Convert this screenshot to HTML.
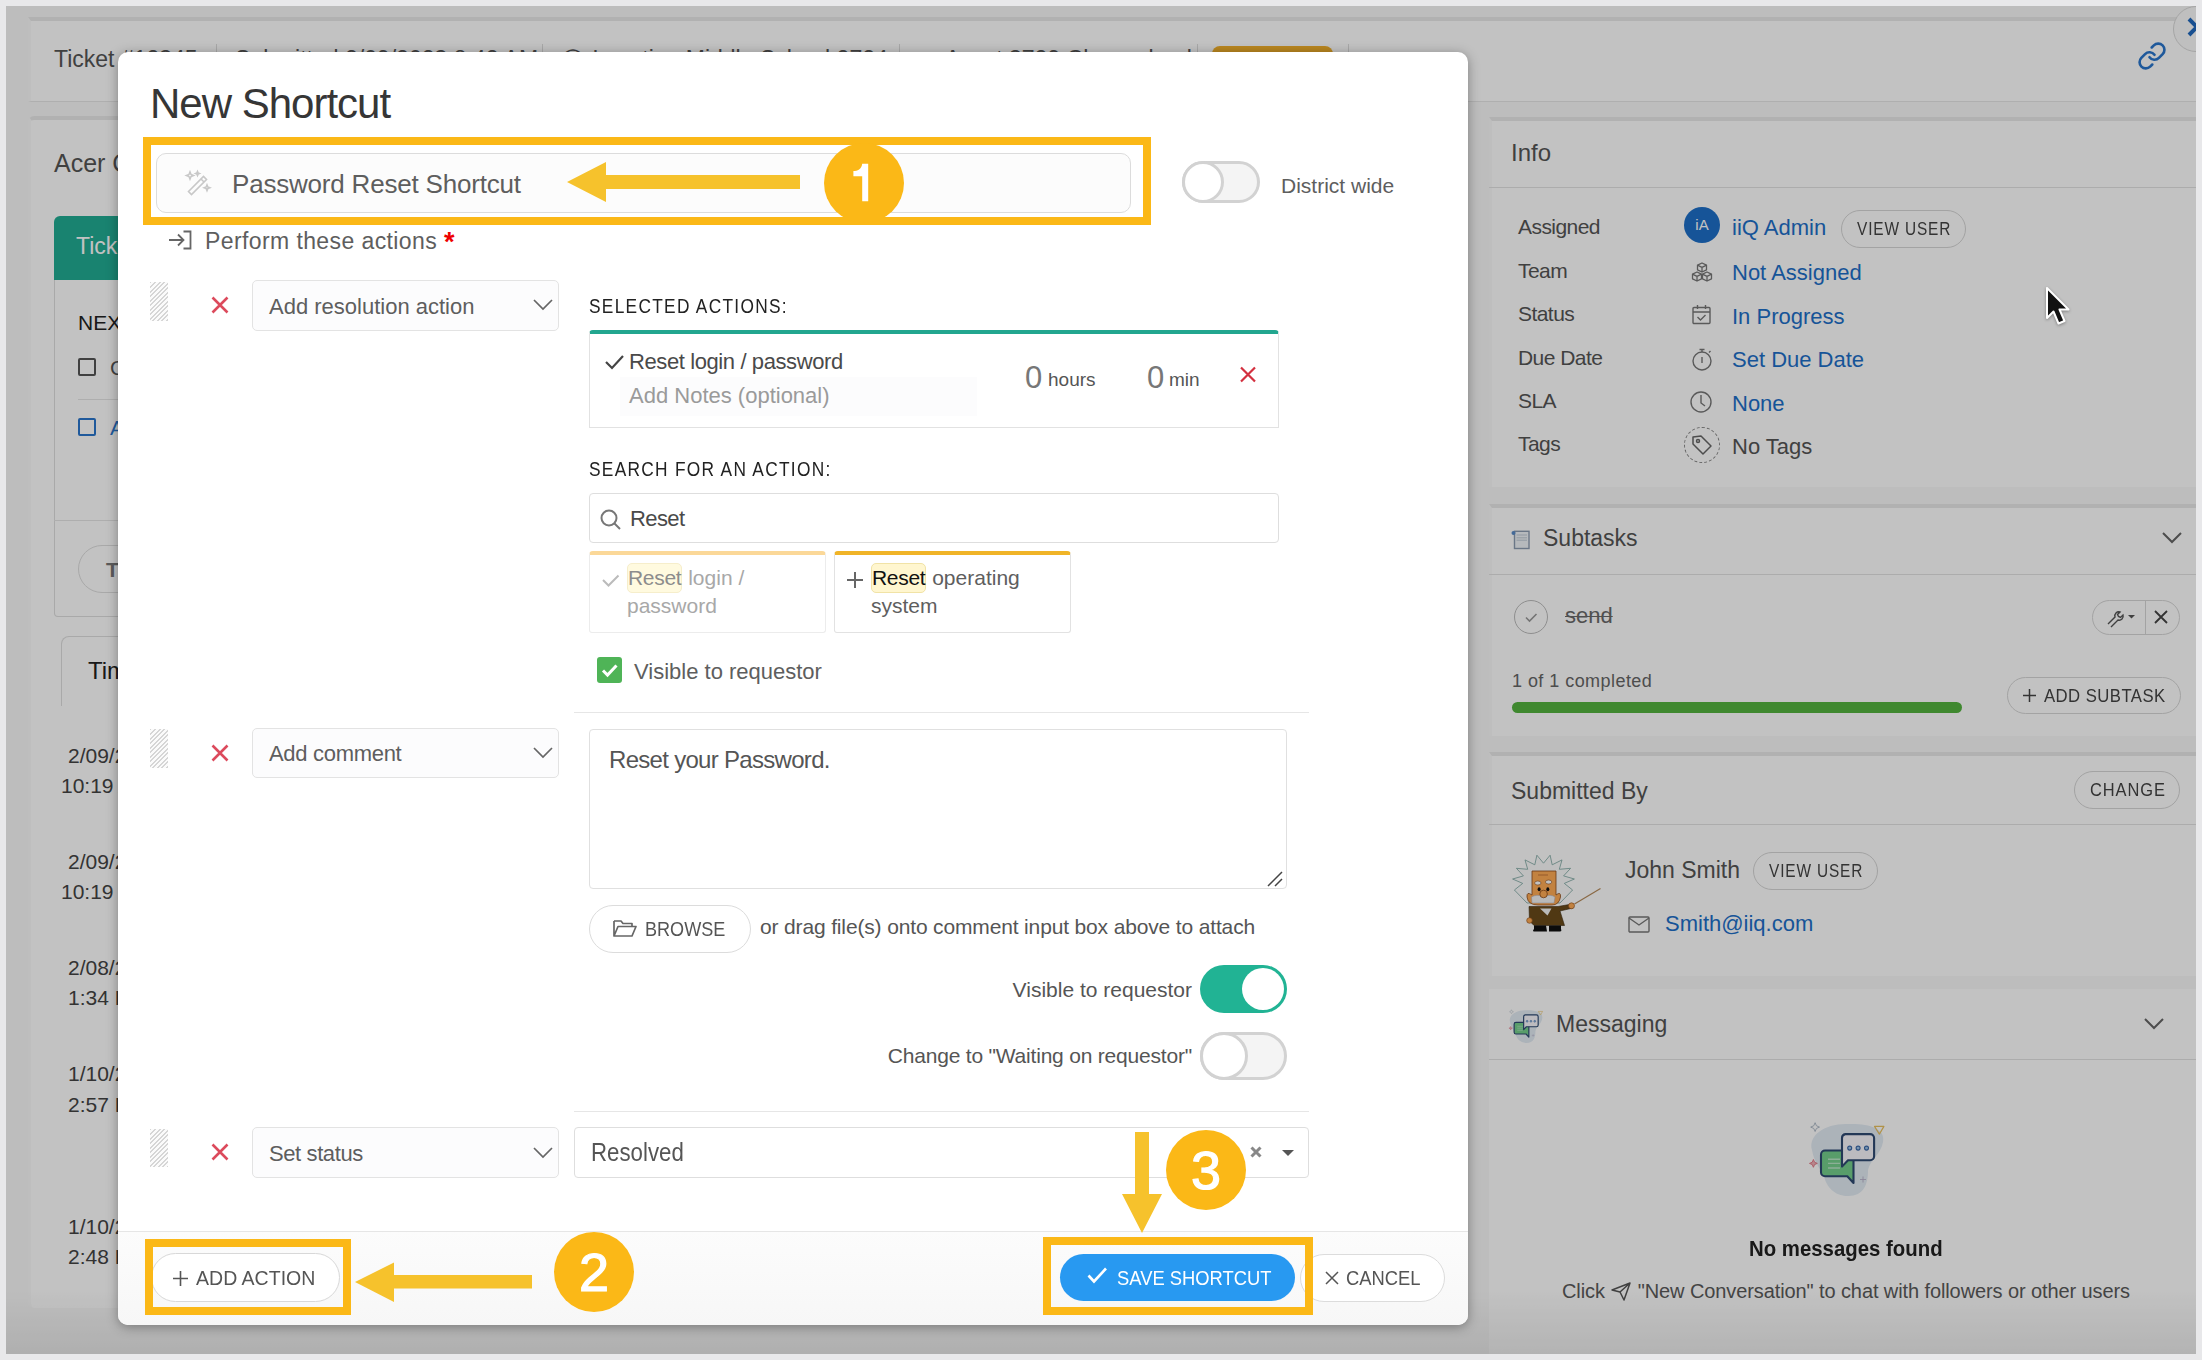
<!DOCTYPE html>
<html><head><meta charset="utf-8">
<style>
*{box-sizing:border-box;margin:0;padding:0}
html,body{width:2202px;height:1360px;overflow:hidden;background:#e8e8ea;font-family:"Liberation Sans",sans-serif}
.a{position:absolute}
.t{position:absolute;white-space:nowrap;line-height:1}
#page{position:absolute;left:6px;top:6px;width:2190px;height:1348px;background:#f9f9f9;overflow:hidden}
#ov{position:absolute;left:6px;top:6px;width:2190px;height:1348px;background:rgba(0,0,0,0.24)}
.card{position:absolute;background:#fff;border-top:4px solid #e9e9e9;border-left:3px solid #fafafa}
#modal{position:absolute;left:118px;top:52px;width:1350px;height:1273px;background:#fff;border-radius:10px;box-shadow:0 2px 12px rgba(0,0,0,.35);overflow:hidden}
.yb{position:absolute;border:8px solid #fbb817}
.num{position:absolute;width:80px;height:80px;border-radius:50%;background:#fbb817;color:#fff;font-size:54px;text-align:center;line-height:80px;-webkit-text-stroke:1.2px #fff;font-family:"Liberation Sans",sans-serif}
.hatch{background:repeating-linear-gradient(135deg,#d6d6d6 0 1.4px,#fbfbfb 1.4px 3.2px)}
.hl{display:inline-block;background:#fff6cf;border:1px solid #f1e3a6;border-radius:5px;padding:3px 0 4px;margin:-4px 0 0 0;letter-spacing:-0.3px}
.sel{border:1px solid #e3e3e3;border-radius:5px;background:#fcfcfd}
</style></head><body>
<div id="page"></div>

<!-- top header card -->
<div class="card" style="left:28px;top:17px;width:2168px;height:85px;border-bottom:1px solid #e6e6e6"></div>
<div class="t" style="left:54px;top:48px;font-size:23px;color:#555">Ticket #12345</div>
<div class="t" style="left:235px;top:48px;font-size:23px;color:#555">Submitted 2/09/2023 8:42 AM</div>
<div class="t" style="left:560px;top:48px;font-size:23px;color:#555">&#9711; Location Middle School 2724</div>
<div class="t" style="left:918px;top:48px;font-size:23px;color:#555">&#9634; Asset 3729 Chromebook</div>
<div class="a" style="left:216px;top:44px;width:1px;height:30px;background:#ddd"></div>
<div class="a" style="left:542px;top:44px;width:1px;height:30px;background:#ddd"></div>
<div class="a" style="left:899px;top:44px;width:1px;height:30px;background:#ddd"></div>
<div class="a" style="left:1197px;top:44px;width:1px;height:30px;background:#ddd"></div>
<div class="a" style="left:1348px;top:44px;width:1px;height:30px;background:#ddd"></div>
<div class="a" style="left:1212px;top:46px;width:121px;height:30px;background:#f3b12a;border-radius:8px"></div>
<svg class="a" style="left:2137px;top:41px" width="30" height="30" viewBox="0 0 24 24"><g fill="none" stroke="#2a76cc" stroke-width="2.1" stroke-linecap="round"><path d="M10 13a5 5 0 0 0 7.54.54l3-3a5 5 0 0 0-7.07-7.07l-1.72 1.71"/><path d="M14 11a5 5 0 0 0-7.54-.54l-3 3a5 5 0 0 0 7.07 7.07l1.71-1.71"/></g></svg>
<div class="a" style="left:6px;top:6px;width:2190px;height:1347px;overflow:hidden"><div class="a" style="left:2167px;top:0px;width:46px;height:46px;border-radius:50%;background:#fcfcfc;border:1px solid #d8d8d8"></div><svg class="a" style="left:2180px;top:10px" width="14" height="22" viewBox="0 0 14 22"><path d="M3 3 l8 8 l-8 8" fill="none" stroke="#2068be" stroke-width="4"/></svg></div>

<!-- left main card -->
<div class="card" style="left:28px;top:116px;width:1440px;height:1192px;border-radius:6px"></div>
<div class="t" style="left:54px;top:151px;font-size:25px;color:#555">Acer Chromebook</div>
<div class="a" style="left:54px;top:216px;width:500px;height:64px;background:#21ad94;border-radius:6px 0 0 0"></div>
<div class="t" style="left:76px;top:235px;font-size:23px;color:#fff">Tickets</div>
<div class="a" style="left:54px;top:280px;width:1300px;height:337px;border:1px solid #dedede;border-top:none;border-radius:0 0 4px 4px"></div>
<div class="t" style="left:78px;top:312px;font-size:21px;color:#222">NEXT</div>
<div class="a" style="left:78px;top:358px;width:18px;height:18px;border:2px solid #555;border-radius:2px"></div>
<div class="t" style="left:110px;top:357px;font-size:21px;color:#555">Check</div>
<div class="a" style="left:78px;top:399px;width:1200px;height:1px;background:#e5e5e5"></div>
<div class="a" style="left:78px;top:418px;width:18px;height:18px;border:2px solid #2a76cc;border-radius:2px"></div>
<div class="t" style="left:110px;top:417px;font-size:21px;color:#2a76cc">Add</div>
<div class="a" style="left:54px;top:520px;width:1300px;height:1px;background:#e5e5e5"></div>
<div class="a" style="left:78px;top:545px;width:200px;height:48px;border:1px solid #dedede;border-radius:24px"></div>
<div class="t" style="left:106px;top:559px;font-size:21px;color:#777;font-weight:bold">T</div>
<div class="a" style="left:61px;top:636px;width:300px;height:70px;border:1px solid #dedede;border-bottom:none;border-radius:8px 8px 0 0"></div>
<div class="t" style="left:88px;top:659px;font-size:24px;color:#222">Time</div>
<div class="t" style="left:68px;top:745px;font-size:21px;color:#444">2/09/2023</div>
<div class="t" style="left:61px;top:775px;font-size:21px;color:#444">10:19 AM</div>
<div class="t" style="left:68px;top:851px;font-size:21px;color:#444">2/09/2023</div>
<div class="t" style="left:61px;top:881px;font-size:21px;color:#444">10:19 AM</div>
<div class="t" style="left:68px;top:957px;font-size:21px;color:#444">2/08/2023</div>
<div class="t" style="left:68px;top:987px;font-size:21px;color:#444">1:34 PM</div>
<div class="t" style="left:68px;top:1063px;font-size:21px;color:#444">1/10/2023</div>
<div class="t" style="left:68px;top:1094px;font-size:21px;color:#444">2:57 PM</div>
<div class="t" style="left:68px;top:1216px;font-size:21px;color:#444">1/10/2023</div>
<div class="t" style="left:68px;top:1246px;font-size:21px;color:#444">2:48 PM</div>

<!-- right cards -->
<div class="card" style="left:1489px;top:117px;width:707px;height:370px"></div>
<div class="card" style="left:1489px;top:504px;width:707px;height:232px"></div>
<div class="card" style="left:1489px;top:752px;width:707px;height:224px"></div>
<div class="a" style="left:1489px;top:989px;width:707px;height:365px;background:#fff"></div>


<!-- right panel content -->
<div class="t" style="left:1511px;top:141px;font-size:24px;color:#555">Info</div>
<div class="a" style="left:1489px;top:187px;width:707px;height:1px;background:#e3e3e3"></div>
<div class="t" style="left:1518px;top:216px;font-size:21px;color:#555;letter-spacing:-0.55px">Assigned</div>
<div class="t" style="left:1518px;top:260px;font-size:21px;color:#555;letter-spacing:-0.55px">Team</div>
<div class="t" style="left:1518px;top:303px;font-size:21px;color:#555;letter-spacing:-0.55px">Status</div>
<div class="t" style="left:1518px;top:347px;font-size:21px;color:#555;letter-spacing:-0.55px">Due Date</div>
<div class="t" style="left:1518px;top:390px;font-size:21px;color:#555;letter-spacing:-0.55px">SLA</div>
<div class="t" style="left:1518px;top:433px;font-size:21px;color:#555;letter-spacing:-0.55px">Tags</div>
<div class="a" style="left:1684px;top:207px;width:36px;height:36px;border-radius:50%;background:#1d6fc8;color:#fff;font-size:15px;text-align:center;line-height:36px">iA</div>
<div class="t" style="left:1732px;top:217px;font-size:22px;color:#1d6fc8">iiQ Admin</div>
<div class="a" style="left:1841px;top:210px;width:125px;height:38px;border:1px solid #d6d6d6;border-radius:19px"></div>
<div class="t" style="left:1857px;top:220px;font-size:18px;color:#444;letter-spacing:1px;transform:scaleX(.856);transform-origin:left">VIEW USER</div>
<svg class="a" style="left:1690px;top:260px" width="24" height="24" viewBox="0 0 24 24"><g fill="none" stroke="#777" stroke-width="1.3" stroke-linejoin="round"><path d="M12 3 l4.5 2.2 v4.6 L12 12 l-4.5-2.2 V5.2z M7.5 5.2 L12 7.4 l4.5-2.2 M12 7.4 V12"/><path d="M7 12 l4.5 2.2 v4.6 L7 21 l-4.5-2.2 V14.2z M2.5 14.2 L7 16.4 l4.5-2.2 M7 16.4 V21"/><path d="M17 12 l4.5 2.2 v4.6 L17 21 l-4.5-2.2 V14.2z M12.5 14.2 L17 16.4 l4.5-2.2 M17 16.4 V21"/></g></svg>
<div class="t" style="left:1732px;top:262px;font-size:22px;color:#1d6fc8">Not Assigned</div>
<svg class="a" style="left:1690px;top:303px" width="24" height="24" viewBox="0 0 24 24"><g fill="none" stroke="#777" stroke-width="1.4"><rect x="3" y="4.5" width="17" height="16" rx="1"/><path d="M3 9 h17 M7.5 2 v4 M15.5 2 v4 M7.5 14 l3 3 l5-5"/></g></svg>
<div class="t" style="left:1732px;top:306px;font-size:22px;color:#1d6fc8">In Progress</div>
<svg class="a" style="left:1690px;top:346px" width="24" height="26" viewBox="0 0 24 26"><g fill="none" stroke="#777" stroke-width="1.4"><circle cx="12" cy="15" r="9"/><path d="M12 11 v6 M9.5 3.5 h5 M12 3.5 v2.5 M19 6.5 l1.5-1.5"/></g></svg>
<div class="t" style="left:1732px;top:349px;font-size:22px;color:#1d6fc8">Set Due Date</div>
<svg class="a" style="left:1688px;top:389px" width="26" height="26" viewBox="0 0 26 26"><g fill="none" stroke="#777" stroke-width="1.4"><circle cx="13" cy="13" r="10"/><path d="M13 6 v8 l4 3"/></g></svg>
<div class="t" style="left:1732px;top:393px;font-size:22px;color:#1d6fc8">None</div>
<div class="a" style="left:1684px;top:427px;width:36px;height:36px;border-radius:50%;border:1.3px dashed #888"></div>
<svg class="a" style="left:1690px;top:433px" width="24" height="24" viewBox="0 0 24 24"><g fill="none" stroke="#666" stroke-width="1.5" stroke-linejoin="round"><path d="M3 4 l8 -1 l10 10 l-8 8 l-10-10 z"/><circle cx="8" cy="8" r="1.5"/></g></svg>
<div class="t" style="left:1732px;top:436px;font-size:22px;color:#555">No Tags</div>

<svg class="a" style="left:1509px;top:528px" width="24" height="24" viewBox="0 0 24 24"><rect x="5.5" y="3.3" width="14.5" height="17.2" fill="#f0f4f8" stroke="#8c9cb0" stroke-width="1.4"/><path d="M7.5 7 H18 M7.5 9.8 H18 M7.5 12.2 H18" stroke="#b4c0cc" stroke-width="0.8"/><circle cx="4.5" cy="5" r="2" fill="#5a8cc8"/></svg>
<div class="t" style="left:1543px;top:527px;font-size:23px;color:#555">Subtasks</div>
<svg class="a" style="left:2160px;top:530px" width="24" height="16" viewBox="0 0 24 16"><path d="M3 3 l9 9 l9-9" fill="none" stroke="#666" stroke-width="2"/></svg>
<div class="a" style="left:1489px;top:574px;width:707px;height:1px;background:#e3e3e3"></div>
<div class="a" style="left:1514px;top:600px;width:34px;height:34px;border-radius:50%;border:1.5px solid #bbb"></div>
<svg class="a" style="left:1521px;top:607px" width="20" height="20" viewBox="0 0 20 20"><path d="M5 10.5 l3.5 3.5 l7-7" fill="none" stroke="#999" stroke-width="1.6"/></svg>
<div class="t" style="left:1565px;top:605px;font-size:22px;color:#6a6a6a;text-decoration:line-through;text-decoration-thickness:1px">send</div>
<div class="a" style="left:2092px;top:600px;width:88px;height:35px;border:1px solid #d6d6d6;border-radius:18px"></div>
<div class="a" style="left:2145px;top:600px;width:1px;height:35px;background:#d6d6d6"></div>
<svg class="a" style="left:2104px;top:606px" width="36" height="22" viewBox="0 0 36 22"><path d="M4 18 l7-7 a4 4 0 0 1 5-5 l-2.5 2.5 l1 2 l2 1 l2.5-2.5 a4 4 0 0 1-5 5 l-7 7" fill="none" stroke="#555" stroke-width="1.4"/><path d="M24 9 h7 l-3.5 3.5z" fill="#555"/></svg>
<svg class="a" style="left:2153px;top:609px" width="16" height="16" viewBox="0 0 16 16"><path d="M2 2 L14 14 M14 2 L2 14" stroke="#444" stroke-width="1.8"/></svg>
<div class="t" style="left:1512px;top:672px;font-size:18px;color:#666;letter-spacing:0.45px">1 of 1 completed</div>
<div class="a" style="left:1512px;top:702px;width:450px;height:11px;border-radius:6px;background:#53b33f"></div>
<div class="a" style="left:2007px;top:677px;width:174px;height:37px;border:1px solid #d6d6d6;border-radius:19px"></div>
<svg class="a" style="left:2022px;top:688px" width="15" height="15" viewBox="0 0 15 15"><path d="M7.5 1 V14 M1 7.5 H14" stroke="#444" stroke-width="1.5"/></svg>
<div class="t" style="left:2044px;top:686px;font-size:19px;color:#444;letter-spacing:0.5px;transform:scaleX(.88);transform-origin:left">ADD SUBTASK</div>

<div class="t" style="left:1511px;top:780px;font-size:23px;color:#555">Submitted By</div>
<div class="a" style="left:2074px;top:771px;width:106px;height:38px;border:1px solid #d6d6d6;border-radius:19px"></div>
<div class="t" style="left:2090px;top:781px;font-size:18px;color:#444;letter-spacing:1px;transform:scaleX(.913);transform-origin:left">CHANGE</div>
<div class="a" style="left:1489px;top:824px;width:707px;height:1px;background:#e3e3e3"></div>
<svg class="a" style="left:1500px;top:845px" width="110" height="95" viewBox="0 0 110 95">
<polygon points="14.4,45.0 22.7,38.4 12.6,34.0 23.4,30.9 16.4,23.3 27.7,24.3 25.0,14.9 34.8,19.8 36.9,10.2 43.5,18.2 50.1,10.2 52.2,19.8 62.0,14.9 59.3,24.3 70.6,23.3 63.6,30.9 74.4,34.0 64.3,38.4 72.6,45.0 60,58 27,58" fill="#fbfcfc" stroke="#7aa5a0" stroke-width="0.8" stroke-linejoin="miter"/>
<path d="M32 26 H56 V50 Q61 46 60.5 52 Q59 60 52 60 H38 Q28 60 27 52 Q26.5 46 32 50 Z" fill="#ffab55" stroke="#8a4a1a" stroke-width="0.8"/>
<path d="M38 30 h10" stroke="#b86a30" stroke-width="0.8"/>
<ellipse cx="37.8" cy="38" rx="3.2" ry="2" fill="#fff" stroke="#8a4a1a" stroke-width="0.6"/><ellipse cx="48.6" cy="37" rx="3.2" ry="2" fill="#fff" stroke="#8a4a1a" stroke-width="0.6"/>
<ellipse cx="39.1" cy="44.3" rx="1.5" ry="2" fill="#111"/><ellipse cx="47.8" cy="44.3" rx="1.5" ry="2" fill="#111"/>
<path d="M31.5 52 Q36 49 43.5 51.5 Q51 49 55 52 L54 58 H32 Z" fill="#f4f4f4" stroke="#aab" stroke-width="0.5"/>
<circle cx="43.6" cy="49" r="3.8" fill="#ffab55" stroke="#8a4a1a" stroke-width="0.8"/>
<path d="M29 61.5 H58 L72 59 L73 63 L60 66 L64.5 80.5 H34 L29.5 76 Z" fill="#6a4a1a" stroke="#3a2a10" stroke-width="0.6"/>
<path d="M40 63.5 H51.5 L47.5 70.5 Z" fill="#f4f4f4"/>
<circle cx="71.5" cy="60.8" r="3" fill="#ffab55" stroke="#8a4a1a" stroke-width="0.6"/>
<circle cx="29.5" cy="75.5" r="2.8" fill="#ffab55" stroke="#8a4a1a" stroke-width="0.6"/>
<path d="M74.5 59 L100.5 43.5" stroke="#b58a5a" stroke-width="1.2"/>
<path d="M34 80.5 H46 L47 86.5 H34 Q32 86.5 34 84 Z M49 80.5 H61 V84 Q62 86.5 60 86.5 H49 Z" fill="#111"/>
</svg>
<div class="t" style="left:1625px;top:859px;font-size:23px;color:#555">John Smith</div>
<div class="a" style="left:1753px;top:852px;width:125px;height:38px;border:1px solid #d6d6d6;border-radius:19px"></div>
<div class="t" style="left:1769px;top:862px;font-size:18px;color:#444;letter-spacing:1px;transform:scaleX(.856);transform-origin:left">VIEW USER</div>
<svg class="a" style="left:1627px;top:915px" width="24" height="20" viewBox="0 0 24 20"><g fill="none" stroke="#777" stroke-width="1.4"><rect x="2" y="2" width="20" height="15" rx="1"/><path d="M2 3 l10 7 l10-7"/></g></svg>
<div class="t" style="left:1665px;top:913px;font-size:22px;color:#1d6fc8">Smith@iiq.com</div>

<svg class="a" style="left:1500px;top:1004px" width="50" height="43" viewBox="0 0 110 95">
<path d="M22 40 C18 26 34 14 56 14 C78 13 96 18 93 32 C91 44 80 50 78 60 C78 74 74 86 58 86 C44 86 36 76 34 66 C30 58 24 52 22 40 Z" fill="#e2ebf4"/>
<path d="M35 40.5 H59.5 a4 4 0 0 1 4 4 V73 L57.3 66.3 H35 a4 4 0 0 1-4-4 V44.5 a4 4 0 0 1 4-4 Z" fill="#74cf8c" stroke="#2e4a72" stroke-width="2.6" stroke-linejoin="round"/>
<path d="M38 49.2 H50 M38 53.4 H50 M38 58 H50" stroke="#b8e6c6" stroke-width="1.4"/>
<path d="M55.3 24.1 H80.1 a4 4 0 0 1 4 4 V46.3 a4 4 0 0 1-4 4 H58 L52 56.6 V28.1 a4 4 0 0 1 3.3-4 Z" fill="#f8f6fc" stroke="#2e4a72" stroke-width="2.6" stroke-linejoin="round"/>
<g fill="#9cc2e6" stroke="#3a68a8" stroke-width="1.1"><circle cx="59.7" cy="38.1" r="2"/><circle cx="68.1" cy="38.1" r="2"/><circle cx="76.5" cy="38.1" r="2"/></g>
<path d="M25.1 12.7 Q25.6 16.6 29.5 17.1 Q25.6 17.6 25.1 21.5 Q24.6 17.6 20.7 17.1 Q24.6 16.6 25.1 12.7 Z" fill="none" stroke="#a8b4c2" stroke-width="0.9"/>
<path d="M84.5 16.4 H93.9 L89.4 24.1 Z" fill="none" stroke="#e8c060" stroke-width="1.2" stroke-linejoin="round"/>
<path d="M23.4 49.5 Q23.8 53 27.3 53.4 Q23.8 53.8 23.4 57.3 Q23 53.8 19.5 53.4 Q23 53 23.4 49.5 Z" fill="#f0b0b8" stroke="#e07080" stroke-width="0.9"/>
<path d="M73 66.5 V72.5 M70 69.5 H76" stroke="#b8b0c8" stroke-width="0.9"/>
</svg>
<div class="t" style="left:1556px;top:1013px;font-size:23px;color:#555">Messaging</div>
<svg class="a" style="left:2142px;top:1016px" width="24" height="16" viewBox="0 0 24 16"><path d="M3 3 l9 9 l9-9" fill="none" stroke="#666" stroke-width="2"/></svg>
<div class="a" style="left:1489px;top:1059px;width:707px;height:1px;background:#e3e3e3"></div>
<svg class="a" style="left:1790px;top:1110px" width="110" height="95" viewBox="0 0 110 95">
<path d="M22 40 C18 26 34 14 56 14 C78 13 96 18 93 32 C91 44 80 50 78 60 C78 74 74 86 58 86 C44 86 36 76 34 66 C30 58 24 52 22 40 Z" fill="#e2ebf4"/>
<path d="M35 40.5 H59.5 a4 4 0 0 1 4 4 V73 L57.3 66.3 H35 a4 4 0 0 1-4-4 V44.5 a4 4 0 0 1 4-4 Z" fill="#74cf8c" stroke="#2e4a72" stroke-width="2.1" stroke-linejoin="round"/>
<path d="M38 49.2 H50 M38 53.4 H50 M38 58 H50" stroke="#b8e6c6" stroke-width="1.4"/>
<path d="M55.3 24.1 H80.1 a4 4 0 0 1 4 4 V46.3 a4 4 0 0 1-4 4 H58 L52 56.6 V28.1 a4 4 0 0 1 3.3-4 Z" fill="#f8f6fc" stroke="#2e4a72" stroke-width="2.1" stroke-linejoin="round"/>
<g fill="#9cc2e6" stroke="#3a68a8" stroke-width="1.1"><circle cx="59.7" cy="38.1" r="2"/><circle cx="68.1" cy="38.1" r="2"/><circle cx="76.5" cy="38.1" r="2"/></g>
<path d="M25.1 12.7 Q25.6 16.6 29.5 17.1 Q25.6 17.6 25.1 21.5 Q24.6 17.6 20.7 17.1 Q24.6 16.6 25.1 12.7 Z" fill="none" stroke="#a8b4c2" stroke-width="0.9"/>
<path d="M84.5 16.4 H93.9 L89.4 24.1 Z" fill="none" stroke="#e8c060" stroke-width="1.2" stroke-linejoin="round"/>
<path d="M23.4 49.5 Q23.8 53 27.3 53.4 Q23.8 53.8 23.4 57.3 Q23 53.8 19.5 53.4 Q23 53 23.4 49.5 Z" fill="#f0b0b8" stroke="#e07080" stroke-width="0.9"/>
<path d="M73 66.5 V72.5 M70 69.5 H76" stroke="#b8b0c8" stroke-width="0.9"/>
</svg>
<div class="t" style="left:1749px;top:1238px;font-size:22px;color:#222;font-weight:bold;transform:scaleX(.926);transform-origin:left">No messages found</div>
<div class="t" style="left:1562px;top:1281px;font-size:20px;color:#5a5a5a;letter-spacing:-0.1px">Click <svg width="22" height="20" viewBox="0 0 22 20" style="vertical-align:-3px"><path d="M2 9 L20 2 L14 19 L10 11z M10 11 L20 2" fill="none" stroke="#555" stroke-width="1.5" stroke-linejoin="round"/></svg> "New Conversation" to chat with followers or other users</div>
<!-- cursor -->
<div class="a" style="left:6px;top:1290px;width:2190px;height:64px;background:linear-gradient(rgba(0,0,0,0),rgba(0,0,0,0.075))"></div>
<div id="ov"></div>
<svg class="a" style="left:2045px;top:286px;filter:drop-shadow(0 1px 1.5px rgba(0,0,0,.35))" width="30" height="44" viewBox="0 0 30 44"><path d="M2 2 L2 32 L8.5 25.5 L13.5 37.5 L19.5 35 L14.5 23.5 L23.5 23.5 Z" fill="#111" stroke="#fff" stroke-width="2" stroke-linejoin="round"/></svg>

<div id="modal"></div>
<div class="t" style="left:150px;top:83px;font-size:42px;color:#363636;letter-spacing:-1px">New Shortcut</div>
<!-- name input -->
<div class="a" style="left:156px;top:153px;width:975px;height:60px;border:1px solid #dcdcdc;border-radius:10px;background:#fcfcfc"></div>
<svg class="a" style="left:184px;top:168px" width="30" height="30" viewBox="0 0 30 30"><g fill="none" stroke="#c8c8c8" stroke-width="1.6"><path d="M4.5 23.5 l15-15 l3 3 l-15 15 z"/><path d="M17 11 l3 3"/><path d="M6 4 l1 2.5 l2.5 1 l-2.5 1 l-1 2.5 l-1-2.5 l-2.5-1 l2.5-1 z"/><path d="M13.5 3.5 l.6 1.4 l1.4.6 l-1.4.6 l-.6 1.4 l-.6-1.4 l-1.4-.6 l1.4-.6 z"/><path d="M23 17 l.8 2 l2 .8 l-2 .8 l-.8 2 l-.8-2 l-2-.8 l2-.8 z"/></g></svg>
<div class="t" style="left:232px;top:171px;font-size:26px;color:#5e5e5e;letter-spacing:-0.2px">Password Reset Shortcut</div>
<!-- district toggle -->
<div class="a" style="left:1182px;top:161px;width:78px;height:42px;border:3px solid #d2d2d2;border-radius:21px;background:#f4f4f4"></div>
<div class="a" style="left:1182px;top:161px;width:42px;height:42px;border:3px solid #d2d2d2;border-radius:50%;background:#fff"></div>
<div class="t" style="left:1281px;top:175px;font-size:21px;color:#5e5e5e">District wide</div>
<!-- perform -->
<svg class="a" style="left:166px;top:228px" width="28" height="24" viewBox="0 0 28 24"><g fill="none" stroke="#666" stroke-width="1.8"><path d="M3 12 h14 M12 6.5 l5.5 5.5 l-5.5 5.5"/><path d="M17.5 3.5 h7 v17 h-7"/></g></svg>
<div class="t" style="left:205px;top:227px;font-size:23px;color:#5e5e5e;letter-spacing:0.4px">Perform these actions <span style="color:#e00;font-size:27px;font-weight:bold;position:relative;top:2px">*</span></div>


<!-- row 1 -->
<div class="a hatch" style="left:150px;top:282px;width:18px;height:39px"></div>
<svg class="a" style="left:210px;top:295px" width="20" height="20" viewBox="0 0 20 20"><path d="M2.5 2.5 L17.5 17.5 M17.5 2.5 L2.5 17.5" stroke="#dc4a5c" stroke-width="2.6"/></svg>
<div class="a sel" style="left:252px;top:280px;width:307px;height:51px"></div>
<div class="t" style="left:269px;top:296px;font-size:22px;color:#5e5e5e">Add resolution action</div>
<svg class="a chev" style="left:532px;top:298px" width="22" height="14" viewBox="0 0 22 14"><path d="M2 2 l9 9 l9-9" fill="none" stroke="#666" stroke-width="1.7"/></svg>

<div class="t" style="left:589px;top:296px;font-size:20px;color:#222;letter-spacing:1.5px;transform:scaleX(.865);transform-origin:left">SELECTED ACTIONS:</div>
<div class="a" style="left:589px;top:330px;width:690px;height:98px;border:1px solid #e2e2e2;border-top:4px solid #22a68f;border-radius:4px 4px 0 0"></div>
<svg class="a" style="left:603px;top:352px" width="22" height="20" viewBox="0 0 22 20"><path d="M3 10 l6 6 l11-12" fill="none" stroke="#444" stroke-width="2.2"/></svg>
<div class="t" style="left:629px;top:351px;font-size:22px;color:#4a4a4a;letter-spacing:-0.4px">Reset login / password</div>
<div class="a" style="left:620px;top:377px;width:357px;height:39px;background:#fcfcfd"></div>
<div class="t" style="left:629px;top:385px;font-size:22px;color:#9a9a9a">Add Notes (optional)</div>
<div class="t" style="left:1025px;top:362px;font-size:31px;color:#777">0</div>
<div class="t" style="left:1048px;top:370px;font-size:19px;color:#555">hours</div>
<div class="t" style="left:1147px;top:362px;font-size:31px;color:#777">0</div>
<div class="t" style="left:1169px;top:370px;font-size:19px;color:#555">min</div>
<svg class="a" style="left:1239px;top:366px" width="18" height="17" viewBox="0 0 18 17"><path d="M2 1.5 L16 15.5 M16 1.5 L2 15.5" stroke="#d3303f" stroke-width="2.2"/></svg>

<div class="t" style="left:589px;top:459px;font-size:20px;color:#222;letter-spacing:1.5px;transform:scaleX(.865);transform-origin:left">SEARCH FOR AN ACTION:</div>
<div class="a" style="left:589px;top:493px;width:690px;height:50px;border:1px solid #dedede;border-radius:4px"></div>
<svg class="a" style="left:598px;top:507px" width="26" height="24" viewBox="0 0 26 24"><g fill="none" stroke="#777" stroke-width="2"><circle cx="11" cy="11" r="7.5"/><path d="M16.5 16.5 L22 22"/></g></svg>
<div class="t" style="left:630px;top:508px;font-size:22px;color:#4a4a4a;letter-spacing:-0.6px">Reset</div>

<div class="a" style="left:589px;top:551px;width:237px;height:82px;border:1px solid #ececec;border-top:4px solid #fbd898;border-radius:4px 4px 3px 3px"></div>
<div class="a" style="left:834px;top:551px;width:237px;height:82px;border:1px solid #e2e2e2;border-top:4px solid #f0b428;border-radius:4px 4px 3px 3px"></div>
<svg class="a" style="left:600px;top:570px" width="22" height="20" viewBox="0 0 22 20"><path d="M3 10 l5.5 5.5 l10-10" fill="none" stroke="#bbb" stroke-width="2"/></svg>
<div class="t" style="left:627px;top:567px;font-size:21px;color:#a8a8a8"><span class="hl" style="background:#fffadf;border-color:#f6eecb;color:#8c8c8c">Reset</span> login /</div>
<div class="t" style="left:627px;top:595px;font-size:21px;color:#a8a8a8">password</div>
<svg class="a" style="left:845px;top:570px" width="20" height="20" viewBox="0 0 20 20"><path d="M10 2 v16 M2 10 h16" stroke="#666" stroke-width="2"/></svg>
<div class="t" style="left:871px;top:567px;font-size:21px;color:#5e5e5e"><span class="hl" style="color:#111">Reset</span> operating</div>
<div class="t" style="left:871px;top:595px;font-size:21px;color:#5e5e5e">system</div>

<div class="a" style="left:597px;top:657px;width:25px;height:26px;background:#4fb457;border-radius:3px"></div>
<svg class="a" style="left:597px;top:657px" width="25" height="26" viewBox="0 0 25 26"><path d="M6 13.5 l4.5 4.5 l9-9.5" fill="none" stroke="#fff" stroke-width="3"/></svg>
<div class="t" style="left:634px;top:661px;font-size:22px;color:#5e5e5e">Visible to requestor</div>
<div class="a" style="left:574px;top:712px;width:735px;height:1px;background:#e6e6e6"></div>

<!-- row 2 -->
<div class="a hatch" style="left:150px;top:729px;width:18px;height:39px"></div>
<svg class="a" style="left:210px;top:743px" width="20" height="20" viewBox="0 0 20 20"><path d="M2.5 2.5 L17.5 17.5 M17.5 2.5 L2.5 17.5" stroke="#dc4a5c" stroke-width="2.6"/></svg>
<div class="a sel" style="left:252px;top:728px;width:307px;height:50px"></div>
<div class="t" style="left:269px;top:743px;font-size:22px;color:#5e5e5e;letter-spacing:-0.3px">Add comment</div>
<svg class="a chev" style="left:532px;top:746px" width="22" height="14" viewBox="0 0 22 14"><path d="M2 2 l9 9 l9-9" fill="none" stroke="#666" stroke-width="1.7"/></svg>
<div class="a" style="left:589px;top:729px;width:698px;height:160px;border:1px solid #e0e0e0;border-radius:4px"></div>
<div class="t" style="left:609px;top:748px;font-size:24px;color:#555;letter-spacing:-0.7px">Reset your Password.</div>
<svg class="a" style="left:1266px;top:870px" width="18" height="18" viewBox="0 0 18 18"><path d="M2 16 L16 2 M9 16 L16 9" stroke="#444" stroke-width="1.5"/></svg>
<div class="a" style="left:589px;top:905px;width:162px;height:48px;border:1px solid #dcdcdc;border-radius:24px"></div>
<svg class="a" style="left:612px;top:917px" width="26" height="22" viewBox="0 0 26 22"><path d="M2 4 h7 l2 2.5 h9 v3 M2 4 v15 h18 l4-9.5 h-18 l-4 9.5" fill="none" stroke="#666" stroke-width="1.7" stroke-linejoin="round"/></svg>
<div class="t" style="left:645px;top:918px;font-size:21px;color:#555;transform:scaleX(.86);transform-origin:left">BROWSE</div>
<div class="t" style="left:760px;top:916px;font-size:21px;color:#555;letter-spacing:-0.15px">or drag file(s) onto comment input box above to attach</div>
<div class="t" style="right:1010px;top:979px;font-size:21px;color:#555">Visible to requestor</div>
<div class="a" style="left:1200px;top:965px;width:87px;height:48px;border-radius:24px;background:#21b394"></div>
<div class="a" style="left:1242px;top:968px;width:42px;height:42px;border-radius:50%;background:#fff"></div>
<div class="t" style="right:1010px;top:1045px;font-size:21px;color:#555;letter-spacing:-0.2px">Change to "Waiting on requestor"</div>
<div class="a" style="left:1200px;top:1032px;width:87px;height:48px;border:3px solid #d2d2d2;border-radius:24px;background:#f4f4f4"></div>
<div class="a" style="left:1200px;top:1032px;width:48px;height:48px;border:3px solid #d2d2d2;border-radius:50%;background:#fff"></div>
<div class="a" style="left:574px;top:1111px;width:735px;height:1px;background:#e6e6e6"></div>

<!-- row 3 -->
<div class="a hatch" style="left:150px;top:1129px;width:18px;height:38px"></div>
<svg class="a" style="left:210px;top:1142px" width="20" height="20" viewBox="0 0 20 20"><path d="M2.5 2.5 L17.5 17.5 M17.5 2.5 L2.5 17.5" stroke="#dc4a5c" stroke-width="2.6"/></svg>
<div class="a sel" style="left:252px;top:1127px;width:307px;height:51px"></div>
<div class="t" style="left:269px;top:1143px;font-size:22px;color:#5e5e5e;letter-spacing:-0.4px">Set status</div>
<svg class="a chev" style="left:532px;top:1146px" width="22" height="14" viewBox="0 0 22 14"><path d="M2 2 l9 9 l9-9" fill="none" stroke="#666" stroke-width="1.7"/></svg>
<div class="a" style="left:574px;top:1127px;width:735px;height:51px;border:1px solid #dedede;border-radius:4px"></div>
<div class="t" style="left:591px;top:1140px;font-size:25px;color:#555;transform:scaleX(.89);transform-origin:left">Resolved</div>
<svg class="a" style="left:1249px;top:1145px" width="14" height="14" viewBox="0 0 14 14"><path d="M2.5 2.5 L11.5 11.5 M11.5 2.5 L2.5 11.5" stroke="#888" stroke-width="3"/></svg>
<svg class="a" style="left:1281px;top:1149px" width="14" height="8" viewBox="0 0 14 8"><path d="M1 1 h12 l-6 6 z" fill="#555"/></svg>

<!-- footer -->
<div class="a" style="left:118px;top:1231px;width:1350px;height:94px;background:linear-gradient(#fcfcfc,#f7f7f7);border-top:1px solid #e6e6e6;border-radius:0 0 10px 10px"></div>
<div class="a" style="left:151px;top:1253px;width:189px;height:49px;border:1px solid #d8d8d8;border-radius:25px;background:#fff"></div>
<svg class="a" style="left:172px;top:1270px" width="17" height="17" viewBox="0 0 17 17"><path d="M8.5 1 V16 M1 8.5 H16" stroke="#555" stroke-width="1.6"/></svg>
<div class="t" style="left:196px;top:1267px;font-size:21px;color:#555;transform:scaleX(.93);transform-origin:left">ADD ACTION</div>
<div class="a" style="left:1060px;top:1254px;width:235px;height:47px;border-radius:24px;background:#2899f1"></div>
<svg class="a" style="left:1085px;top:1264px" width="24" height="22" viewBox="0 0 24 22"><path d="M3.5 11.5 l5.5 6 l12-13" fill="none" stroke="#fff" stroke-width="2.6"/></svg>
<div class="t" style="left:1117px;top:1267px;font-size:21px;color:#fff;transform:scaleX(.875);transform-origin:left">SAVE SHORTCUT</div>
<div class="a" style="left:1300px;top:1254px;width:145px;height:48px;border:1px solid #dcdcdc;border-radius:24px;background:#fff"></div>
<svg class="a" style="left:1324px;top:1270px" width="16" height="16" viewBox="0 0 16 16"><path d="M2 2 L14 14 M14 2 L2 14" stroke="#555" stroke-width="1.5"/></svg>
<div class="t" style="left:1346px;top:1267px;font-size:21px;color:#555;transform:scaleX(.875);transform-origin:left">CANCEL</div>

<!-- annotations -->
<div class="yb" style="left:143px;top:137px;width:1008px;height:88px"></div>
<svg class="a" style="left:560px;top:158px" width="245" height="48" viewBox="0 0 245 48"><path d="M7 24 L46 4 L46 17 L240 17 L240 31 L46 31 L46 44 Z" fill="#f6c22c"/></svg>
<div class="num" style="left:824px;top:143px"></div>
<svg class="a" style="left:840px;top:150px" width="40" height="60" viewBox="840 150 40 60"><path d="M862.2 163.8 H868.2 V201.2 H862.2 V176.2 H853.4 V171 C857.5 171 861.5 169.5 862.2 163.8 Z" fill="#fff"/></svg>
<div class="yb" style="left:145px;top:1239px;width:206px;height:76px"></div>
<svg class="a" style="left:350px;top:1258px" width="186" height="48" viewBox="0 0 186 48"><path d="M5 24 L44 4.5 L44 17 L182 17 L182 30.5 L44 30.5 L44 44 Z" fill="#f6c22c"/></svg>
<div class="num" style="left:554px;top:1232px">2</div>
<div class="yb" style="left:1043px;top:1237px;width:270px;height:78px"></div>
<svg class="a" style="left:1118px;top:1128px" width="48" height="108" viewBox="0 0 48 108"><path d="M17 4 L31 4 L31 66 L44 66 L24 105 L4 66 L17 66 Z" fill="#f6c22c"/></svg>
<div class="num" style="left:1166px;top:1130px">3</div>
</body></html>
